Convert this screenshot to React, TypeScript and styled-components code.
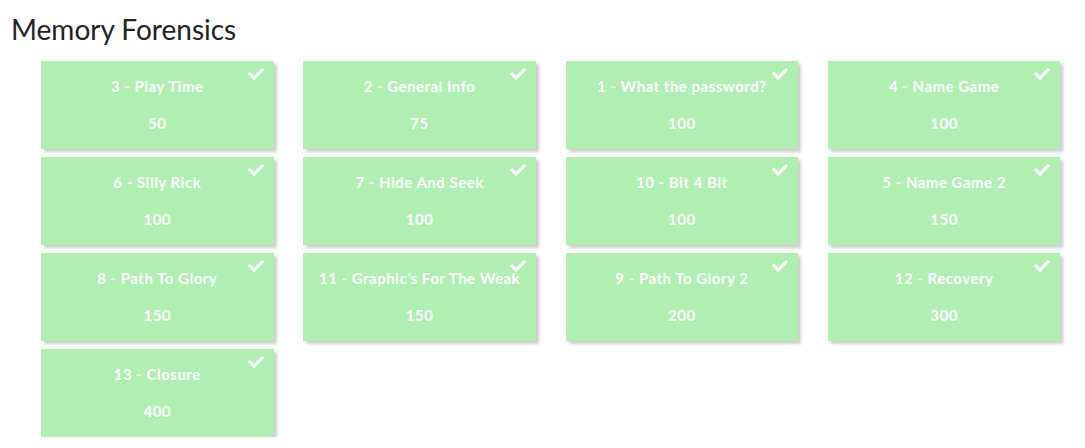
import React from "react";
import styled, { createGlobalStyle } from "styled-components";
import { FaCheck } from "react-icons/fa";

const Global = createGlobalStyle`
  html, body { margin: 0; padding: 0; background: #fff; }
  body { font-family: Lato, "Open Sans", sans-serif; }
`;

const Page = styled.div`
  padding: 11px 0 0 11px;
`;

const Title = styled.h2`
  margin: 0;
  font-family: Lato, sans-serif;
  font-weight: 400;
  font-size: 28px;
  line-height: 36px;
  color: #222;
`;

const Grid = styled.div`
  display: grid;
  grid-template-columns: repeat(4, 232.5px);
  column-gap: 29.8px;
  row-gap: 8px;
  margin: 14px 0 0 30px;
`;

const Card = styled.div`
  position: relative;
  height: 88px;
  background: #b0efb1;
  box-shadow: 3px 3px 3px rgba(0, 0, 0, 0.2);
  color: #fff;
  font-weight: 700;
  font-size: 15px;
  text-align: center;
  display: flex;
  flex-direction: column;
  align-items: center;
  padding-top: 16px;
  box-sizing: border-box;
`;

const Name = styled.div`
  line-height: 18px;
  letter-spacing: 0.5px;
  white-space: nowrap;
`;

const Points = styled.div`
  margin-top: 19px;
  line-height: 18px;
  letter-spacing: 0.5px;
`;

const Check = styled.span`
  position: absolute;
  top: 5px;
  right: 10px;
  display: flex;
  font-size: 16px;
`;

const items: [string, number][] = [
  ["3 - Play Time", 50],
  ["2 - General Info", 75],
  ["1 - What the password?", 100],
  ["4 - Name Game", 100],
  ["6 - Silly Rick", 100],
  ["7 - Hide And Seek", 100],
  ["10 - Bit 4 Bit", 100],
  ["5 - Name Game 2", 150],
  ["8 - Path To Glory", 150],
  ["11 - Graphic's For The Weak", 150],
  ["9 - Path To Glory 2", 200],
  ["12 - Recovery", 300],
  ["13 - Closure", 400],
];

export default function App() {
  return (
    <Page>
      <Global />
      <Title>Memory Forensics</Title>
      <Grid>
        {items.map(([n, p]) => (
          <Card key={n}>
            <Check>
              <FaCheck />
            </Check>
            <Name>{n}</Name>
            <Points>{p}</Points>
          </Card>
        ))}
      </Grid>
    </Page>
  );
}
